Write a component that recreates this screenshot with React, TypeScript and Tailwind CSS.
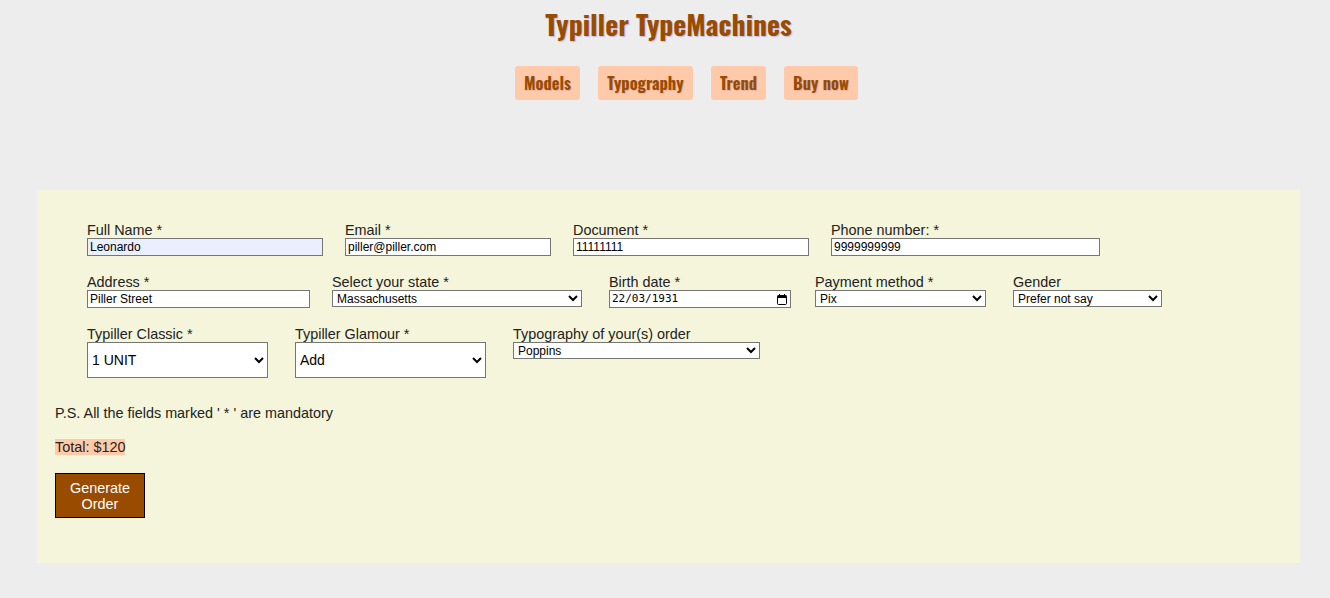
import React from 'react';

const condensed = { fontFamily: '"Oswald", "DejaVu Sans Condensed", sans-serif' };

const labelCls = 'block text-[14.4px] leading-4 text-[#222]';
const inputCls =
  'block h-[18px] border border-[#767676] px-[2px] text-[12px] leading-4 text-black outline-none';
const selectCls =
  'block h-[17px] border border-[#767676] bg-white text-[12px] leading-4 text-black outline-none';

const Field = ({ label, className, children }: { label: string; className?: string; children: React.ReactNode }) => (
  <div className={className}>
    <label className={labelCls}>{label}</label>
    {children}
  </div>
);

const navItems = [
  { name: 'Models', w: 'w-[65px]' },
  { name: 'Typography', w: 'w-[95px]' },
  { name: 'Trend', w: 'w-[55px]' },
  { name: 'Buy now', w: 'w-[74px]' },
];

const App = () => {
  return (
    <div
      className="min-h-[598px] bg-[#ededed] pt-[1px]"
      style={{ fontFamily: '"Liberation Sans", Arial, sans-serif' }}
    >
      <header className="flex flex-col items-center">
        <h1
          className="mt-[4px] pl-[7px] whitespace-nowrap text-[27.7px] font-bold leading-[38px] text-[#994c00] [text-shadow:1px_1px_1px_rgba(90,80,200,0.3)]"
          style={condensed}
        >
          Typiller TypeMachines
        </h1>
        <nav className="mt-[23px] flex gap-[18px] pl-[43px]">
          {navItems.map((item) => (
            <a
              key={item.name}
              href="#"
              className={`flex h-[34px] items-center justify-center rounded-[3px] bg-[#ffcaa9] ${item.w}`}
            >
              <span
                className="inline-block whitespace-nowrap text-[16.5px] font-bold text-[#994c00] [text-shadow:1px_1px_1px_rgba(90,80,200,0.2)]"
                style={condensed}
              >
                {item.name}
              </span>
            </a>
          ))}
        </nav>
      </header>

      <main className="mx-[37px] mt-[90px] mr-[30px] bg-[#f5f5dc] pb-[45px] pl-[18px] pt-[32px]">
        <form className="flex flex-col" onSubmit={(e) => e.preventDefault()}>
          <div className="flex flex-col gap-[18px] pl-[32px]">
            <div className="flex gap-[22px]">
              <Field label="Full Name *">
                <input className={`${inputCls} w-[236px] bg-[#e8f0fe]`} defaultValue="Leonardo" />
              </Field>
              <Field label="Email *">
                <input className={`${inputCls} w-[206px] bg-white`} defaultValue="piller@piller.com" />
              </Field>
              <Field label="Document *">
                <input className={`${inputCls} w-[236px] bg-white`} defaultValue="11111111" />
              </Field>
              <Field label="Phone number: *">
                <input className={`${inputCls} w-[269px] bg-white`} defaultValue="9999999999" />
              </Field>
            </div>

            <div className="flex">
              <Field label="Address *" className="mr-[22px]">
                <input className={`${inputCls} w-[223px] bg-white`} defaultValue="Piller Street" />
              </Field>
              <Field label="Select your state *" className="mr-[27px]">
                <select className={`${selectCls} w-[250px]`} defaultValue="MA">
                  <option value="MA">Massachusetts</option>
                </select>
              </Field>
              <Field label="Birth date *" className="mr-[24px]">
                <div className="flex h-[18px] w-[182px] items-center justify-between border border-[#767676] bg-white pl-[2px] pr-[3px]">
                  <span
                    className="leading-4 text-black"
                    style={{ fontFamily: '"DejaVu Sans Mono", monospace', fontSize: '11px' }}
                  >
                    22/03/1931
                  </span>
                  <svg width="10" height="11" viewBox="0 0 10 11">
                    <rect x="0.5" y="1.5" width="9" height="9" rx="1" fill="none" stroke="#000" />
                    <rect x="0.5" y="1.5" width="9" height="2.5" fill="#000" />
                    <rect x="2" y="0" width="1" height="2" fill="#000" />
                    <rect x="7" y="0" width="1" height="2" fill="#000" />
                  </svg>
                </div>
              </Field>
              <Field label="Payment method *" className="mr-[27px]">
                <select className={`${selectCls} w-[171px]`} defaultValue="pix">
                  <option value="pix">Pix</option>
                </select>
              </Field>
              <Field label="Gender">
                <select className={`${selectCls} w-[149px]`} defaultValue="none">
                  <option value="none">Prefer not say</option>
                </select>
              </Field>
            </div>

            <div className="flex">
              <Field label="Typiller Classic *" className="mr-[27px]">
                <select
                  className="block h-[36px] w-[181px] border border-[#767676] bg-white text-[14px] text-black outline-none"
                  defaultValue="1"
                >
                  <option value="1">1 UNIT</option>
                </select>
              </Field>
              <Field label="Typiller Glamour *" className="mr-[27px]">
                <select
                  className="block h-[36px] w-[191px] border border-[#767676] bg-white text-[14px] text-black outline-none"
                  defaultValue="add"
                >
                  <option value="add">Add</option>
                </select>
              </Field>
              <Field label="Typography of your(s) order">
                <select className={`${selectCls} h-[16px] w-[247px]`} defaultValue="poppins">
                  <option value="poppins">Poppins</option>
                </select>
              </Field>
            </div>
          </div>

          <p className="mt-[27px] text-[14.4px] leading-4 text-[#222]">
            P.S. All the fields marked ' * ' are mandatory
          </p>
          <p className="mt-[18px] leading-4">
            <span className="bg-[#ffcaa9] text-[14.4px] leading-4 text-[#222]">Total: $120</span>
          </p>
          <button
            type="submit"
            className="mt-[18px] h-[45px] w-[90px] border border-black bg-[#994c00] text-[14.4px] leading-4 text-white"
          >
            Generate
            <br />
            Order
          </button>
        </form>
      </main>
    </div>
  );
};

export default App;
